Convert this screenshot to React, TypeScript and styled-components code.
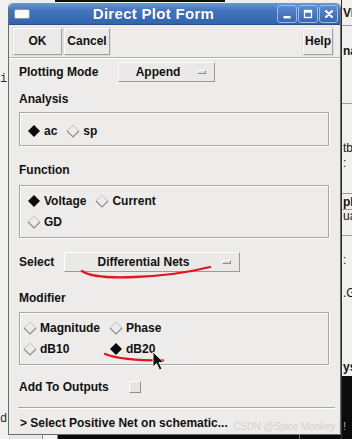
import styled, { createGlobalStyle } from 'styled-components';

const GlobalStyle = createGlobalStyle`
  html, body {
    margin: 0;
    padding: 0;
    background: #eeeeec;
  }
  body {
    font-family: 'Liberation Sans', Arial, sans-serif;
  }
  * {
    box-sizing: border-box;
  }
`;

const Desktop = styled.div`
  position: relative;
  display: flex;
  width: 352px;
  height: 439px;
  overflow: hidden;
  background: #eeeeec;
`;

const LeftStrip = styled.div`
  width: 8px;
  flex: none;
  display: flex;
  flex-direction: column;
  padding-top: 72px;
  font-family: 'Liberation Mono', monospace;
  font-size: 12px;
  line-height: 14px;
  color: #2a2a2a;
  background: #f1f1f0;
  overflow: hidden;
`;

const StripGlyph = styled.span<{ $mt: number }>`
  margin-top: ${(p) => p.$mt}px;
  white-space: nowrap;
`;

const Center = styled.div`
  width: 333px;
  flex: none;
  display: flex;
  flex-direction: column;
`;

const TopStrip = styled.div`
  height: 3px;
  flex: none;
  background: linear-gradient(
      to right,
      #eeeeec 47px,
      #0d0d0d 47px,
      #0d0d0d 217px,
      #eeeeec 217px
    )
    top / 100% 2px no-repeat,
    #eeeeec;
`;

const BottomStrip = styled.div`
  flex: 1;
  background: linear-gradient(
    to right,
    #e6e6e4 34px,
    #8a8a8a 34px,
    #8a8a8a 35px,
    #f3f3f3 35px,
    #f3f3f3 49px,
    #8a8a8a 49px,
    #8a8a8a 50px,
    #0b0b0b 50px,
    #0b0b0b 291px,
    #3a7bd5 291px,
    #3a7bd5 292px,
    #0b0b0b 292px
  );
`;

const Window = styled.div`
  height: 432px;
  flex: none;
  display: flex;
  flex-direction: column;
  background: #edecea;
  border: 1px solid #6c6c6c;
  border-top: none;
  border-radius: 5px 5px 0 0;
  overflow: hidden;
`;

const TitleBar = styled.div`
  height: 22px;
  flex: none;
  display: flex;
  align-items: center;
  gap: 1px;
  padding: 0 2px 0 5px;
  background: linear-gradient(#6a95d4, #4476bf 35%, #3263ad);
  border-bottom: 1px solid #274f8c;
  border-radius: 5px 5px 0 0;
`;

const WinIcon = styled.span`
  width: 16px;
  height: 10px;
  background: #fbfbfb;
  border: 1px solid #8193b0;
  border-radius: 2px;
`;

const Title = styled.div`
  flex: 1;
  text-align: center;
  color: #ffffff;
  font-weight: 700;
  font-size: 15px;
  letter-spacing: 0.3px;
  text-shadow: 0 0 1px rgba(20, 40, 80, 0.5);
`;

const WinButton = styled.span<{ $w: number }>`
  width: ${(p) => p.$w}px;
  height: 18px;
  display: grid;
  place-items: center;
  border: 1px solid #9fbbe4;
  border-radius: 3px;
  background: linear-gradient(#5d8bcf, #3767b1);
`;

const Toolbar = styled.div`
  height: 33px;
  flex: none;
  display: flex;
  align-items: center;
  gap: 2px;
  padding: 0 7px 0 4px;
  border-bottom: 1px solid #b3b1ae;
  box-shadow: 0 1px 0 #ffffff;
`;

const ToolButton = styled.button<{ $w: number }>`
  width: ${(p) => p.$w}px;
  height: 27px;
  padding: 0;
  font-family: 'Liberation Sans', Arial, sans-serif;
  font-weight: 700;
  font-size: 12px;
  color: #111;
  background: #ebeae8;
  border: 1px solid;
  border-color: #fdfdfd #a3a2a0 #a3a2a0 #fdfdfd;
  box-shadow: 0 0 0 0.5px #cfcecc;
`;

const Spacer = styled.div`
  flex: 1;
`;

const Body = styled.div`
  flex: 1;
  display: flex;
  flex-direction: column;
  padding: 4px 11px 0 10px;
  font-size: 12px;
  font-weight: 700;
  color: #111;
`;

const Row = styled.div<{ $mt?: number }>`
  display: flex;
  align-items: center;
  height: 20px;
  margin-top: ${(p) => p.$mt ?? 0}px;
`;

const FieldLabel = styled.span<{ $w: number }>`
  width: ${(p) => p.$w}px;
  flex: none;
  white-space: nowrap;
`;

const Heading = styled.div<{ $mt: number }>`
  height: 15px;
  line-height: 15px;
  margin-top: ${(p) => p.$mt}px;
`;

const Dropdown = styled.div<{ $w: number }>`
  width: ${(p) => p.$w}px;
  height: 20px;
  display: flex;
  align-items: center;
  padding-right: 8px;
  background: #eae9e7;
  border: 1px solid;
  border-color: #fdfdfd #9a9997 #9a9997 #fdfdfd;
`;

const DropdownText = styled.span`
  flex: 1;
  text-align: center;
`;

const Indicator = styled.span`
  width: 9px;
  height: 4px;
  border: 1px solid;
  border-color: #ffffff #8d8c8a #8d8c8a #ffffff;
  background: #dcdbd9;
`;

const Frame = styled.div<{ $mt: number; $pad: string }>`
  margin-top: ${(p) => p.$mt}px;
  padding: ${(p) => p.$pad};
  border: 1px solid #a8a7a5;
  box-shadow: inset 1px 1px 0 #ffffff, 1px 1px 0 #ffffff;
`;

const RadioGrid = styled.div`
  display: grid;
  grid-template-columns: repeat(2, max-content);
  grid-auto-rows: 21px;
  column-gap: 9px;
`;

const RadioItem = styled.label`
  display: flex;
  align-items: center;
  gap: 3px;
  white-space: nowrap;
`;

const CheckBox = styled.span`
  width: 12px;
  height: 12px;
  background: #e6e5e3;
  border: 1px solid;
  border-color: #fdfdfd #8f8e8c #8f8e8c #fdfdfd;
`;

const Separator = styled.div`
  height: 2px;
  margin: 10px -6px 0 -1px;
  border-top: 1px solid #a9a8a6;
  border-bottom: 1px solid #ffffff;
`;

const Prompt = styled.div`
  margin-top: 7px;
  height: 14px;
  line-height: 14px;
  padding-left: 1px;
  white-space: nowrap;
`;

const RightStrip = styled.div`
  flex: 1;
  display: flex;
  flex-direction: column;
  border-left: 1px solid #2e2e2e;
  background: #f0f0ef;
  font-size: 12px;
  color: #151515;
  overflow: hidden;
`;

const SideCell = styled.div<{ $h: number; $bold?: boolean; $line?: boolean }>`
  height: ${(p) => p.$h}px;
  flex: none;
  display: flex;
  align-items: center;
  padding-left: 1px;
  white-space: nowrap;
  font-weight: ${(p) => (p.$bold ? 700 : 400)};
  border-bottom: ${(p) => (p.$line ? '1px solid #9d9c9a' : 'none')};
`;

const SideFill = styled.div`
  flex: 1;
  background: #0b0b0b;
`;

const Watermark = styled.div`
  position: absolute;
  left: 233px;
  top: 421px;
  font-size: 10px;
  letter-spacing: -0.1px;
  color: rgba(205, 205, 205, 0.9);
  white-space: nowrap;
  pointer-events: none;
`;

const Marks = styled.svg`
  position: absolute;
  left: 0;
  top: 0;
  pointer-events: none;
`;

function Diamond({ on }: { on?: boolean }) {
  return (
    <svg width="14" height="14" viewBox="0 0 14 14">
      {on ? (
        <polygon points="7,1 13,7 7,13 1,7" fill="#0a0a0a" />
      ) : (
        <>
          <polyline points="1,7 7,1 13,7" fill="none" stroke="#d3d2d0" strokeWidth="1.2" />
          <polyline points="1,7 7,13 13,7" fill="none" stroke="#8e8d8b" strokeWidth="1.2" />
        </>
      )}
    </svg>
  );
}

function Radio({ label, on }: { label: string; on?: boolean }) {
  return (
    <RadioItem>
      <Diamond on={on} />
      {label}
    </RadioItem>
  );
}

export default function App() {
  return (
    <>
      <GlobalStyle />
      <Desktop>
        <LeftStrip>
          <StripGlyph $mt={0}>i</StripGlyph>
          <StripGlyph $mt={326}>d</StripGlyph>
        </LeftStrip>

        <Center>
          <TopStrip />
          <Window>
            <TitleBar>
              <WinIcon />
              <Title>Direct Plot Form</Title>
              <WinButton $w={20}>
                <svg width="10" height="10" viewBox="0 0 10 10">
                  <rect x="1.5" y="7" width="7" height="2.4" fill="#fff" />
                </svg>
              </WinButton>
              <WinButton $w={20}>
                <svg width="10" height="10" viewBox="0 0 10 10">
                  <rect x="1.5" y="1.5" width="7" height="7" fill="none" stroke="#fff" strokeWidth="1.3" />
                  <rect x="1.5" y="1.5" width="7" height="2.2" fill="#fff" />
                </svg>
              </WinButton>
              <WinButton $w={19}>
                <svg width="10" height="10" viewBox="0 0 10 10">
                  <path d="M2 2 L8 8 M8 2 L2 8" stroke="#fff" strokeWidth="2.1" strokeLinecap="round" />
                </svg>
              </WinButton>
            </TitleBar>

            <Toolbar>
              <ToolButton $w={49}>OK</ToolButton>
              <ToolButton $w={46}>Cancel</ToolButton>
              <Spacer />
              <ToolButton $w={30}>Help</ToolButton>
            </Toolbar>

            <Body>
              <Row>
                <FieldLabel $w={99}>Plotting Mode</FieldLabel>
                <Dropdown $w={97}>
                  <DropdownText>Append</DropdownText>
                  <Indicator />
                </Dropdown>
              </Row>

              <Heading $mt={10}>Analysis</Heading>
              <Frame $mt={5} $pad="7px 0 4px 7px">
                <RadioGrid>
                  <Radio label="ac" on />
                  <Radio label="sp" />
                </RadioGrid>
              </Frame>

              <Heading $mt={17}>Function</Heading>
              <Frame $mt={7} $pad="4px 0 5px 7px">
                <RadioGrid>
                  <Radio label="Voltage" on />
                  <Radio label="Current" />
                  <Radio label="GD" />
                </RadioGrid>
              </Frame>

              <Row $mt={14}>
                <FieldLabel $w={45}>Select</FieldLabel>
                <Dropdown $w={176}>
                  <DropdownText>Differential Nets</DropdownText>
                  <Indicator />
                </Dropdown>
              </Row>

              <Heading $mt={19}>Modifier</Heading>
              <Frame $mt={6} $pad="4px 0 5px 3px">
                <RadioGrid>
                  <Radio label="Magnitude" />
                  <Radio label="Phase" />
                  <Radio label="dB10" />
                  <Radio label="dB20" on />
                </RadioGrid>
              </Frame>

              <Row $mt={12}>
                <FieldLabel $w={110}>Add To Outputs</FieldLabel>
                <CheckBox />
              </Row>

              <Separator />
              <Prompt>&gt; Select Positive Net on schematic...</Prompt>
            </Body>
          </Window>
          <BottomStrip />
        </Center>

        <RightStrip>
          <SideCell $h={26} $bold $line>Vir</SideCell>
          <SideCell $h={16} />
          <SideCell $h={18} $bold>na</SideCell>
          <SideCell $h={44} $line />
          <SideCell $h={36} />
          <SideCell $h={16}>tbe</SideCell>
          <SideCell $h={14}>:</SideCell>
          <SideCell $h={24} $line />
          <SideCell $h={16} $bold $line>ple</SideCell>
          <SideCell $h={12}>ua</SideCell>
          <SideCell $h={14} $line />
          <SideCell $h={48}>:</SideCell>
          <SideCell $h={18}>.G</SideCell>
          <SideCell $h={56} />
          <SideCell $h={18} $bold>ysi</SideCell>
          <SideFill />
        </RightStrip>

        <Watermark>CSDN @Spice Monkey ! !</Watermark>

        <Marks width="352" height="439" viewBox="0 0 352 439">
          <path
            d="M82 271 C 90 277, 110 278, 135 277 S 190 272, 210 267"
            fill="none"
            stroke="#e3141c"
            strokeWidth="2.3"
            strokeLinecap="round"
          />
          <path
            d="M105 354 C 115 358, 135 360.5, 163 360.5"
            fill="none"
            stroke="#e3141c"
            strokeWidth="2.3"
            strokeLinecap="round"
          />
          <path
            d="M153 352 L153 367 L156.5 363.5 L159.5 370 L162 369 L159 362.5 L164 362.5 Z"
            fill="#111"
            stroke="#f4f4f4"
            strokeWidth="0.9"
            strokeLinejoin="round"
          />
        </Marks>
      </Desktop>
    </>
  );
}
